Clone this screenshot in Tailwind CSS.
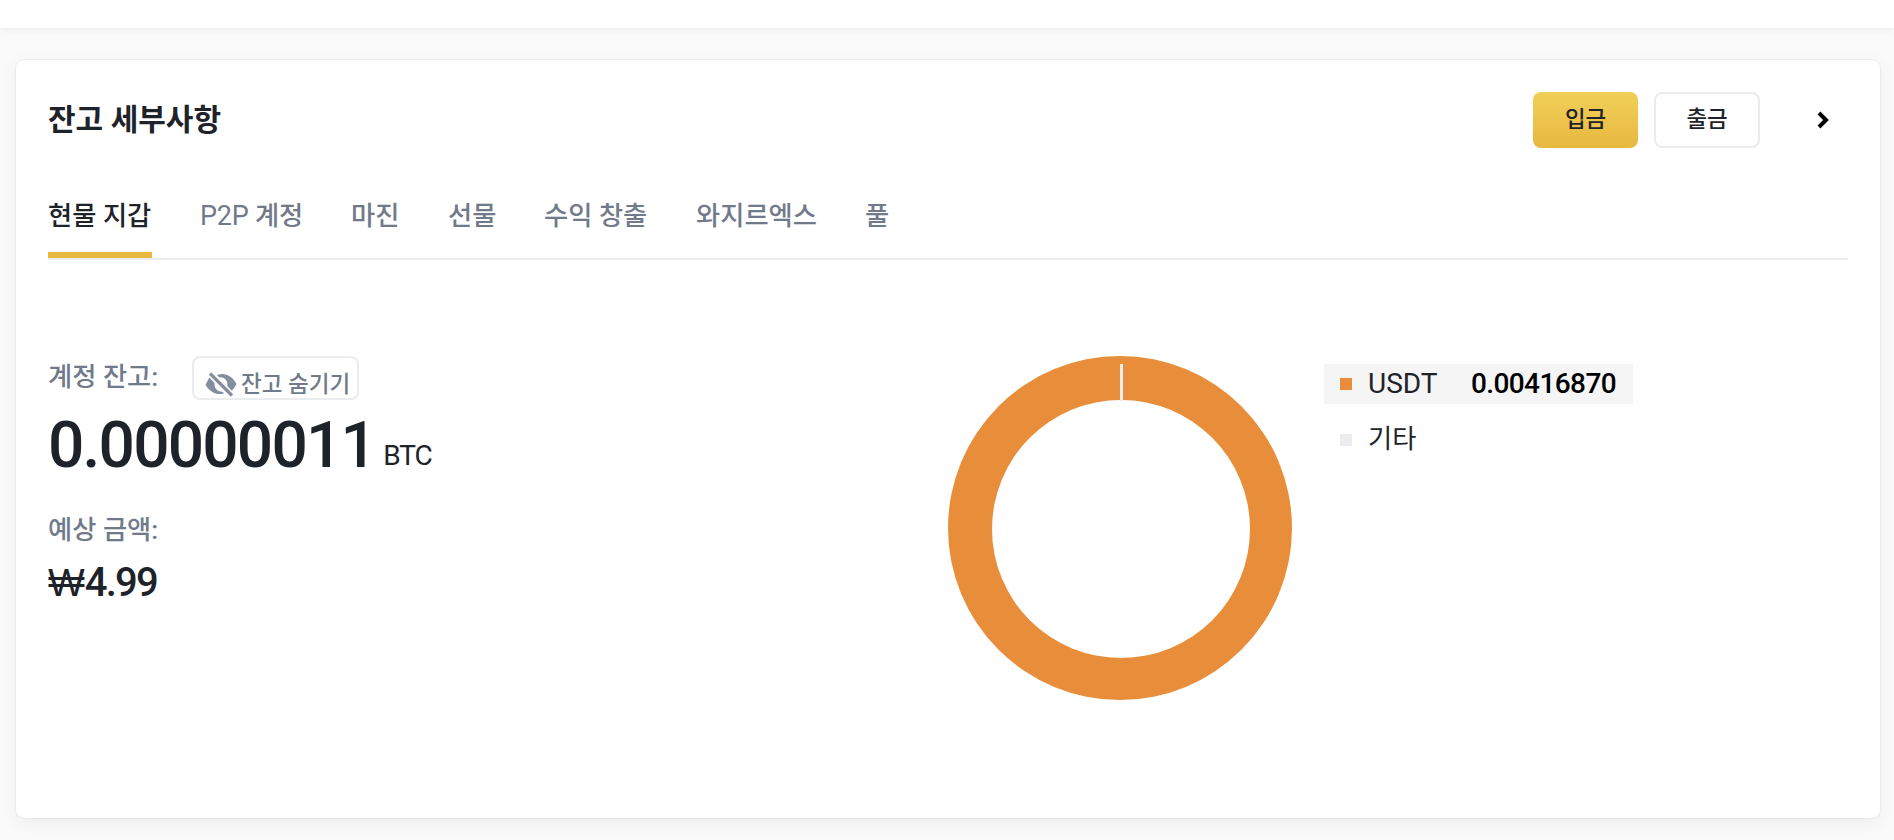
<!DOCTYPE html>
<html lang="ko">
<head>
    <meta charset="UTF-8">
    <meta name="viewport" content="width=device-width, initial-scale=1.0">
    <title>잔고 세부사항</title>
    <script src="https://cdn.jsdelivr.net/npm/@tailwindcss/browser@4"></script>
</head>
<body class="h-[840px] overflow-hidden bg-[#fafafa] font-[Roboto,'Noto_Sans_CJK_KR',sans-serif] text-[#1e2329]">
    <header class="h-7 bg-white shadow-[0_2px_6px_rgba(0,0,0,0.05)]"></header>
    <main class="mt-8 mr-3.5 ml-4 h-[758px] rounded-lg bg-white pt-8 pr-8 pl-8 shadow-[0_0_2px_rgba(20,21,26,0.14),0_4px_16px_rgba(71,77,87,0.07)]">
        <!-- header -->
        <div class="flex h-14 items-center justify-between">
            <h1 class="text-[30px] leading-14 font-bold">잔고 세부사항</h1>
            <div class="flex items-center pr-[19px]">
                <button class="h-14 w-[105px] rounded-lg bg-linear-to-b from-[#f0d058] to-[#e8b840] text-[22.4px] font-medium">입금</button>
                <button class="ml-4 h-14 w-[106px] rounded-lg border-2 border-[#eaecef] text-[22.4px] font-medium">출금</button>
                <svg class="ml-[57px] h-[18px] w-[12px]" viewBox="0 0 12 18" fill="none" stroke="#000" stroke-width="4"><path d="M2 2L9 9L2 16"/></svg>
            </div>
        </div>
        <!-- tabs -->
        <nav class="mt-9 flex h-[76px] gap-12 border-b-2 border-[#eaecef] text-[26.3px] leading-[64px] font-medium whitespace-nowrap text-[#707a8a]">
            <a class="h-[74px] w-[104px] border-b-6 border-[#e8b840] text-[#1e2329]">현물 지갑</a>
            <a class="w-[103px] tracking-[-0.2px]"><span class="text-[27px] font-normal">P2P</span> 계정</a>
            <a class="w-[49px]">마진</a>
            <a class="w-12">선물</a>
            <a class="w-[104px]">수익 창출</a>
            <a class="w-[121px]">와지르엑스</a>
            <a class="w-6">풀</a>
        </nav>
        <div class="flex pt-24">
            <!-- balance -->
            <section class="w-[900px]">
                <div class="flex">
                    <span class="w-36 text-[26.3px] leading-[43px] font-medium text-[#707a8a]">계정 잔고:</span>
                    <button class="flex h-11 w-[167px] items-start rounded-lg border-2 border-[#eaecef] pl-[11px] text-[22.5px] leading-[52px] font-medium whitespace-nowrap text-[#707a8a]">
                        <svg class="mt-[14px] mr-1 h-[25px] w-8 shrink-0" viewBox="0 0 32 25" fill="#848e9c">
                            <path d="M4.5 5.5L19 21.2C12 24 5 20 .5 13Q2.2 9 4.5 5.5Z"/>
                            <path d="M12 3C20 0 27 4 31.5 12Q29.5 16 26.8 18.8Z"/>
                            <path d="M9.6 10.6L18.2 19.8C13 20.5 8.5 16 9.6 10.6Z" fill="#fff"/>
                            <path d="M14 5.5C19.5 4.5 23.5 9.5 22.2 14.3Z" fill="#fff"/>
                            <path d="M5 1.5L27 23.5" stroke="#848e9c" stroke-width="3.2"/>
                        </svg>
                        잔고 숨기기
                    </button>
                </div>
                <p class="mt-1.5 flex leading-[80px]">
                    <span class="text-[64px] font-medium tracking-[-1.8px]">0.00000011</span>
                    <span class="ml-2 pt-2.5 text-[28px] tracking-[-1px]">BTC</span>
                </p>
                <p class="mt-3.5 text-[26.3px] leading-10 font-medium text-[#707a8a]">예상 금액:</p>
                <p class="mt-[9px] text-[40px] leading-12 font-medium tracking-[-1.8px]"><span class="font-['Liberation_Sans',sans-serif] text-[39px] font-normal tracking-normal">₩</span>4.99</p>
            </section>
            <!-- chart -->
            <svg class="size-[344px] shrink-0" viewBox="0 0 344 344">
                <circle cx="172" cy="172" r="172" fill="#e88d39"/>
                <circle cx="173" cy="173" r="129" fill="#fff"/>
                <path d="M173.5 8V45" stroke="#eaecef" stroke-width="3"/>
            </svg>
            <ul class="mt-2 ml-8 text-[28px]">
                <li class="flex h-10 w-[309px] items-center bg-[#f5f5f5] pl-4">
                    <i class="size-3 bg-[#e88d39]"></i>
                    <span class="ml-4 w-[103px]">USDT</span>
                    <span class="font-medium tracking-[-0.6px] text-black">0.00416870</span>
                </li>
                <li class="mt-4 flex h-10 items-center pl-4">
                    <i class="size-3 bg-[#eaecef]"></i>
                    <span class="ml-4 text-[26.3px]">기타</span>
                </li>
            </ul>
        </div>
    </main>
</body>
</html>
